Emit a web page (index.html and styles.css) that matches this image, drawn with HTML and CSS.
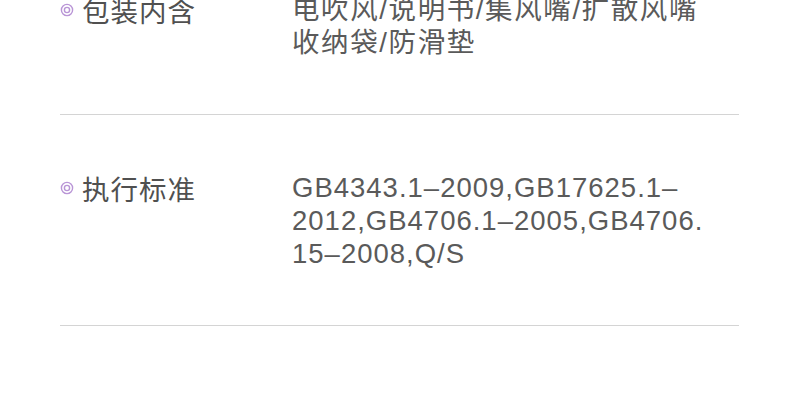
FILE: index.html
```html
<!DOCTYPE html>
<html lang="zh-CN">
<head>
    <meta charset="UTF-8">
    <meta name="viewport" content="width=device-width, initial-scale=1.0">
    <title>规格参数</title>
    <link rel="stylesheet" href="styles.css">
</head>
<body>
    <div class="spec-list">
        <div class="spec-row">
            <div class="spec-label">
                <svg class="dot" width="14" height="14" viewBox="0 0 14 14"><circle cx="7" cy="7" r="5.6" fill="none" stroke="#b995d6" stroke-width="1.4"/><circle cx="7" cy="7" r="2.6" fill="none" stroke="#b995d6" stroke-width="1.4"/></svg>
                <span>包装内含</span>
            </div>
            <div class="spec-value spec-value-cn">电吹风/说明书/集风嘴/扩散风嘴<br>收纳袋/防滑垫</div>
        </div>
        <div class="spec-row">
            <div class="spec-label">
                <svg class="dot" width="14" height="14" viewBox="0 0 14 14"><circle cx="7" cy="7" r="5.6" fill="none" stroke="#b995d6" stroke-width="1.4"/><circle cx="7" cy="7" r="2.6" fill="none" stroke="#b995d6" stroke-width="1.4"/></svg>
                <span>执行标准</span>
            </div>
            <div class="spec-value">GB4343.1–2009,GB17625.1–<br>2012,GB4706.1–2005,GB4706.<br>15–2008,Q/S</div>
        </div>
    </div>
</body>
</html>
```
FILE: styles.css
```css
body {
    margin: 0;
    background: #fff;
    font-family: "Liberation Sans", "Noto Sans CJK SC", sans-serif;
    color: #555;
}
.spec-list {
    margin: -63px 51px 0 60px;
}
.spec-row {
    display: flex;
    padding: 56px 0 55px;
    border-bottom: 1px solid #d4d4d4;
}
.spec-label {
    width: 232px;
    display: flex;
    align-items: center;
    align-self: flex-start;
    height: 33px;
    font-size: 27.5px;
    letter-spacing: 1px;
    color: #505050;
}
.dot {
    margin-right: 8px;
    flex-shrink: 0;
}
.spec-value {
    font-size: 27.5px;
    line-height: 33px;
    letter-spacing: 1px;
    color: #5a5a5a;
}
.spec-value-cn {
    letter-spacing: 1.6px;
}
```
